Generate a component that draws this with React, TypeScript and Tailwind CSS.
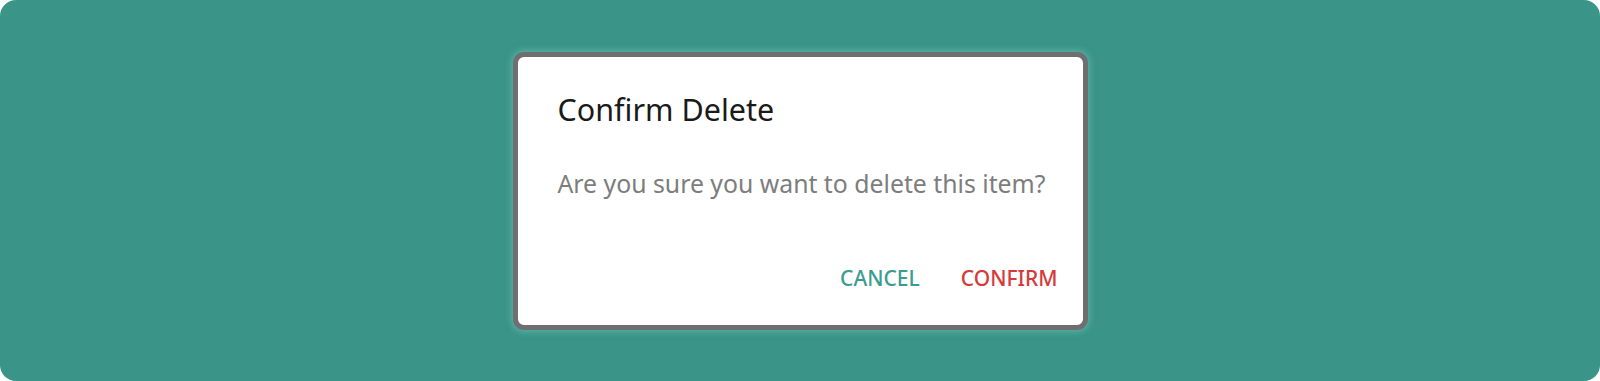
import React from "react";

export default function App() {
  return (
    <div className="w-[1600px] h-[381px] bg-white">
      <div
        className="w-full h-full rounded-[16px] bg-[#3a9488] flex items-center justify-center"
        style={{ fontFamily: '"Noto Sans", "Open Sans", sans-serif' }}
      >
        <div className="w-[575px] h-[278px] rounded-[11px] border-[5px] border-[#6f6f6f] bg-white flex flex-col shadow-[0_0_6px_2px_rgba(120,200,190,0.5)]">
          <div className="pl-[40px] pr-[25px] pt-[32px] flex flex-col h-full">
            <h2 className="text-[30.5px] leading-[40px] text-[#1a1a1a]">Confirm Delete</h2>
            <p className="mt-[37px] text-[24.8px] leading-[34px] text-[#7d7d7d]">
              Are you sure you want to delete this item?
            </p>
            <div className="mt-auto mb-[33px] flex justify-end items-center gap-[41px]">
              <button className="text-[21px] leading-[28px] font-medium text-[#3a9d8f]">CANCEL</button>
              <button className="text-[21px] leading-[28px] font-medium text-[#d63a3a]">CONFIRM</button>
            </div>
          </div>
        </div>
      </div>
    </div>
  );
}
